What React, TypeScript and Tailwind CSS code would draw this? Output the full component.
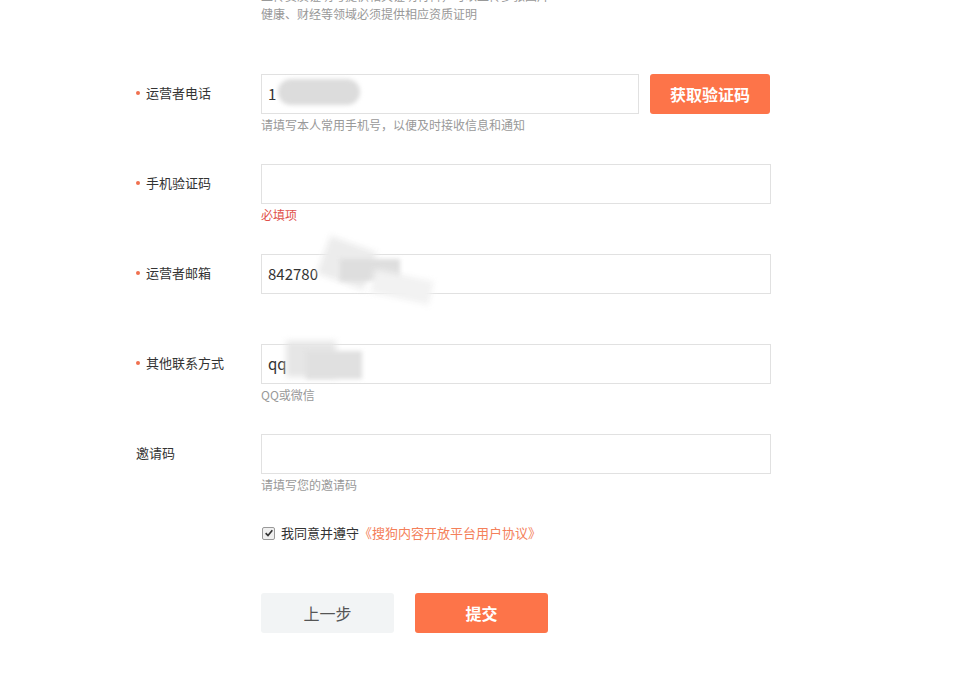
import React from 'react';

type Field = {
  label: string;
  required: boolean;
  value?: string;
  hint?: string;
  hintRed?: boolean;
  withButton?: boolean;
  blur?: 'phone' | 'email' | 'qq';
};

const fields: Field[] = [
  { label: '运营者电话', required: true, value: '1', hint: '请填写本人常用手机号，以便及时接收信息和通知', withButton: true, blur: 'phone' },
  { label: '手机验证码', required: true, hint: '必填项', hintRed: true },
  { label: '运营者邮箱', required: true, value: '842780', blur: 'email' },
  { label: '其他联系方式', required: true, value: 'qq', hint: 'QQ或微信', blur: 'qq' },
  { label: '邀请码', required: false, hint: '请填写您的邀请码' },
];

// privacy smudges laid over the filled inputs
const Smudge: React.FC<{ kind: Field['blur'] }> = ({ kind }) => {
  if (kind === 'phone') {
    return <div className="absolute left-[16px] top-[4px] w-[82px] h-[26px] rounded-full bg-[#dcdcdc] blur-[2px]" />;
  }
  if (kind === 'email') {
    return (
      <>
        <div className="absolute left-[60px] top-[-12px] w-[50px] h-[40px] rotate-[20deg] bg-[#ececec] blur-[3px]" />
        <div className="absolute left-[78px] top-[4px] w-[60px] h-[22px] bg-[#dedede] blur-[2px]" />
        <div className="absolute left-[110px] top-[20px] w-[60px] h-[24px] rotate-[12deg] bg-[#f2f2f2] blur-[3px]" />
      </>
    );
  }
  if (kind === 'qq') {
    return (
      <>
        <div className="absolute left-[24px] top-[-4px] w-[50px] h-[36px] bg-[#e6e6e6] blur-[3px]" />
        <div className="absolute left-[44px] top-[6px] w-[56px] h-[28px] bg-[#e0e0e0] blur-[2px]" />
      </>
    );
  }
  return null;
};

const FormRow: React.FC<{ field: Field }> = ({ field }) => (
  <div className="flex h-[90px]">
    <div className="w-[125px] shrink-0 flex items-start leading-[37px] text-[13px] text-[#333]">
      {field.required && <span className="mt-[17px] mr-[6px] w-[4px] h-[4px] rounded-full bg-[#f0704f]" />}
      <span>{field.label}</span>
    </div>
    <div className="flex flex-col">
      <div className="flex gap-[11px]">
        <div
          className={`relative h-[40px] border border-[#e1e1e1] bg-white pl-[6px] flex items-center text-[15px] text-[#333] ${
            field.withButton ? 'w-[378px]' : 'w-[510px]'
          }`}
        >
          <span className="relative z-0">{field.value}</span>
          <Smudge kind={field.blur} />
        </div>
        {field.withButton && (
          <button className="w-[120px] h-[40px] rounded-[3px] bg-[#fd7449] text-white text-[16px] font-bold">
            获取验证码
          </button>
        )}
      </div>
      {field.hint && (
        <div className={`mt-[2px] text-[12px] leading-[18px] ${field.hintRed ? 'text-[#e0504a]' : 'text-[#999]'}`}>
          {field.hint}
        </div>
      )}
    </div>
  </div>
);

const App: React.FC = () => {
  return (
    <div
      className="w-[961px] h-[690px] bg-white overflow-hidden"
      style={{ fontFamily: '"Noto Sans CJK SC", "Liberation Sans", sans-serif' }}
    >
      <div className="pl-[136px]">
        {/* tail of the previous field's hint, clipped by the top edge as in the screenshot */}
        <div className="ml-[125px] mt-[-13px] text-[12px] leading-[18px] text-[#999]">
          <div>上传资质证明与提供相关证明材料，可以上传多张图片</div>
          <div>健康、财经等领域必须提供相应资质证明</div>
        </div>

        <div className="mt-[51px]">
          {fields.map((f) => (
            <FormRow key={f.label} field={f} />
          ))}
        </div>

        <div className="ml-[125px] flex items-center h-[18px] text-[13px]">
          <span className="ml-[1px] w-[13px] h-[13px] border border-[#999] rounded-[2px] bg-[#f0f0f0] flex items-center justify-center">
            <svg viewBox="0 0 12 12" className="w-[10px] h-[10px]">
              <path d="M2 6.2 L4.8 9 L10 2.8" fill="none" stroke="#333" strokeWidth="2" />
            </svg>
          </span>
          <span className="ml-[6px] text-[#333]">我同意并遵守</span>
          <span className="text-[#f4805a]">《搜狗内容开放平台用户协议》</span>
        </div>

        <div className="ml-[125px] mt-[51px] flex gap-[21px]">
          <button className="w-[133px] h-[40px] rounded-[3px] bg-[#f2f4f5] text-[16px] text-[#555]">上一步</button>
          <button className="w-[133px] h-[40px] rounded-[3px] bg-[#fd7449] text-[16px] text-white font-bold">提交</button>
        </div>
      </div>
    </div>
  );
};

export default App;
